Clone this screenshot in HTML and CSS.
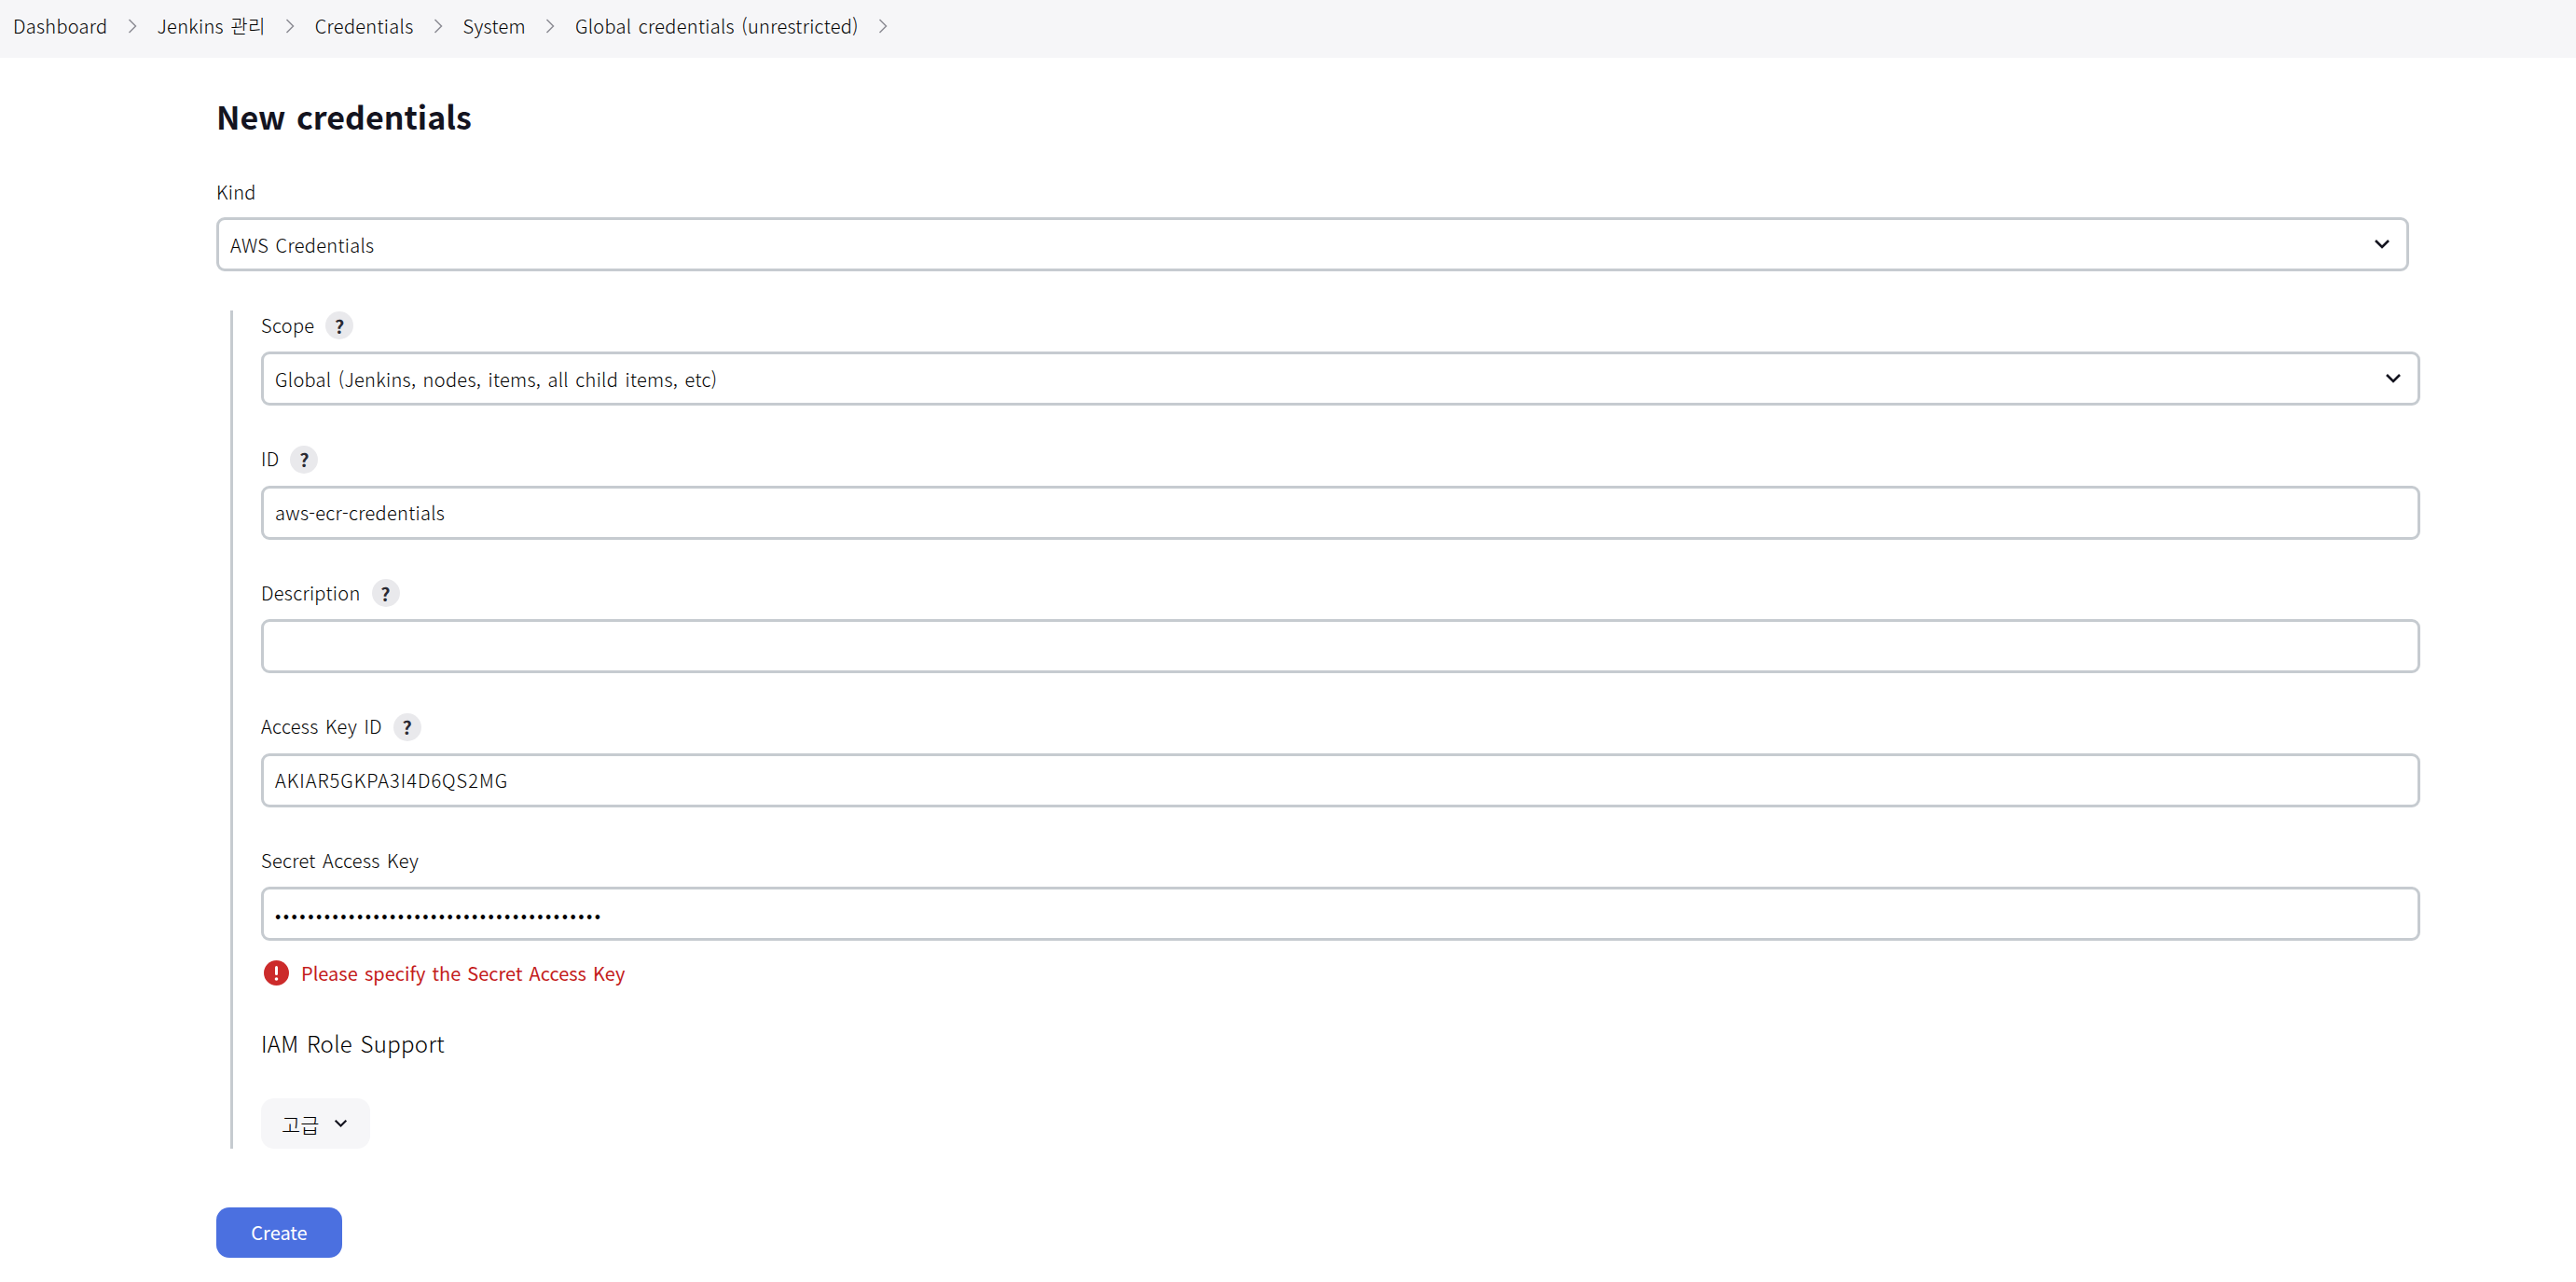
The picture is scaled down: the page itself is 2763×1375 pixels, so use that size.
FILE: index.html
```html
<!DOCTYPE html>
<html lang="ko">
<head>
<meta charset="utf-8">
<title>New credentials</title>
<link rel="stylesheet" href="styles.css">
</head>
<body>
<nav class="crumbs">
  <span class="crumb">Dashboard</span>
  <svg class="sep" viewBox="0 0 10 16"><path d="M1.5 1l7 7-7 7"/></svg>
  <span class="crumb">Jenkins 관리</span>
  <svg class="sep" viewBox="0 0 10 16"><path d="M1.5 1l7 7-7 7"/></svg>
  <span class="crumb">Credentials</span>
  <svg class="sep" viewBox="0 0 10 16"><path d="M1.5 1l7 7-7 7"/></svg>
  <span class="crumb">System</span>
  <svg class="sep" viewBox="0 0 10 16"><path d="M1.5 1l7 7-7 7"/></svg>
  <span class="crumb">Global credentials (unrestricted)</span>
  <svg class="sep" viewBox="0 0 10 16"><path d="M1.5 1l7 7-7 7"/></svg>
</nav>
<main class="page">
  <h1 class="title">New credentials</h1>
  <div class="label-row"><span class="label-text">Kind</span></div>
  <div class="box select"><span>AWS Credentials</span><svg class="caret" viewBox="0 0 18 12"><path d="M2 2l7 7 7-7"/></svg></div>
  <section class="panel">
    <div class="field">
      <div class="label-row"><span class="label-text">Scope</span><span class="help">?</span></div>
      <div class="box select"><span>Global (Jenkins, nodes, items, all child items, etc)</span><svg class="caret" viewBox="0 0 18 12"><path d="M2 2l7 7 7-7"/></svg></div>
    </div>
    <div class="field">
      <div class="label-row"><span class="label-text">ID</span><span class="help">?</span></div>
      <div class="box"><span>aws-ecr-credentials</span></div>
    </div>
    <div class="field">
      <div class="label-row"><span class="label-text">Description</span><span class="help">?</span></div>
      <div class="box"></div>
    </div>
    <div class="field">
      <div class="label-row"><span class="label-text">Access Key ID</span><span class="help">?</span></div>
      <div class="box"><span class="key-value">AKIAR5GKPA3I4D6QS2MG</span></div>
    </div>
    <div class="field field-last">
      <div class="label-row"><span class="label-text">Secret Access Key</span></div>
      <div class="box"><span class="dots">••••••••••••••••••••••••••••••••••••••••</span></div>
    </div>
    <div class="error">
      <svg class="error-icon" viewBox="0 0 27 27"><circle class="error-disc" cx="13.5" cy="13.5" r="13.5"/><rect class="error-mark" x="12" y="6" width="3" height="10" rx="1.5"/><circle class="error-mark" cx="13.5" cy="20" r="1.8"/></svg>
      <span>Please specify the Secret Access Key</span>
    </div>
    <div class="subhead">IAM Role Support</div>
    <button class="advanced" type="button"><span>고급</span><svg class="caret small" viewBox="0 0 18 12"><path d="M2 2l7 7 7-7"/></svg></button>
  </section>
  <button class="create" type="button">Create</button>
</main>
</body>
</html>
```
FILE: styles.css
```css
* { box-sizing: border-box; }
html, body { margin: 0; padding: 0; background: #fff; }
body {
  font-family: "Noto Sans CJK KR", "Noto Sans", sans-serif;
  font-size: 20px;
  font-weight: 300;
  letter-spacing: 0.3px;
  word-spacing: 1.5px;
  color: #000;
  min-height: 1375px;
}
.crumbs {
  height: 62px;
  background: #f6f6f8;
  display: flex;
  align-items: center;
  padding-left: 14px;
  gap: 21.5px;
  padding-bottom: 7px;
}
.crumb { line-height: 26px; }
.sep { width: 10px; height: 16px; fill: none; stroke: #8c8c94; stroke-width: 1.5; }
.page { padding: 0 179px 0 232px; }
.title {
  margin: 0;
  padding-top: 40px;
  height: 129px;
  font-size: 34px;
  letter-spacing: 0;
  word-spacing: 2px;
  line-height: 46px;
  font-weight: 700;
  color: #14141f;
}
.label-row {
  display: flex;
  align-items: center;
  gap: 12px;
  height: 30px;
  margin-bottom: 12px;
}
.label-text { padding-bottom: 2px; }
.help {
  width: 30px;
  height: 30px;
  border-radius: 50%;
  background: #e9e9ec;
  display: flex;
  align-items: center;
  justify-content: center;
  font-size: 20px;
  font-weight: 700;
  color: #2a2a33;
}
.box {
  height: 58px;
  border: 3px solid #c6cbd0;
  border-radius: 9px;
  background: #fff;
  padding: 0 12px;
  display: flex;
  align-items: center;
  justify-content: space-between;
}
.caret { width: 18px; height: 12px; fill: none; stroke: #14141f; stroke-width: 2.6; }
.caret.small { width: 15px; height: 10px; }
.select { padding-right: 17px; }
.panel {
  margin: 42px -12px 0 15px;
  border-left: 3px solid #c6cbd0;
  padding: 1px 0 0 30px;
}
.field { margin-bottom: 42.6px; }
.field .label-row { margin-bottom: 13px; }
.field-last { margin-bottom: 0; }
.key-value { letter-spacing: 1px; }
.dots { letter-spacing: 2.45px; }
.error {
  display: flex;
  align-items: center;
  gap: 13px;
  margin-top: 21px;
  padding-left: 3px;
  line-height: 27px;
  font-weight: 400;
  letter-spacing: 0;
  color: #c41c1c;
}
.error-icon { width: 27px; height: 27px; }
.error-disc { fill: #cc2b2b; }
.error-mark { fill: #fff; }
.subhead { margin-top: 44.6px; font-size: 24px; line-height: 34px; }
.advanced {
  display: flex;
  align-items: center;
  gap: 16px;
  margin-top: 42px;
  height: 54px;
  width: 117px;
  padding: 0 0 0 22px;
  border: 0;
  border-radius: 14px;
  background: #f6f6f8;
  font: inherit;
  font-size: 22px;
  color: inherit;
}
.create {
  display: block;
  margin-top: 63px;
  width: 135px;
  height: 54px;
  border: 0;
  border-radius: 14px;
  background: #4b70e0;
  color: #fff;
  font: inherit;
  font-weight: 400;
  padding: 0;
}
```
